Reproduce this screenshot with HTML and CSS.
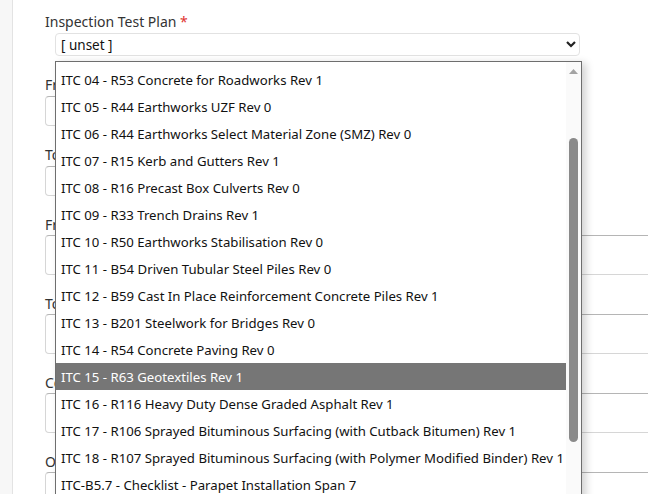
FILE: index.html
```html
<!DOCTYPE html>
<html>
<head>
<meta charset="utf-8">
<link rel="stylesheet" href="styles.css">
</head>
<body>
<div class="page">
  <aside class="rail"></aside>
  <main class="form">
    <div class="group first">
      <label class="label">Inspection Test Plan <span class="req">*</span></label>
      <div class="select">
        <span>[ unset ]</span>
        <svg class="chev" width="10" height="7" viewBox="0 0 10 7"><polyline points="1,1 5,5 9,1" fill="none" stroke="#222" stroke-width="2.2"/></svg>
      </div>
    </div>
    <div class="group">
      <label class="label">From Date</label>
      <div class="input short"></div>
    </div>
    <div class="group">
      <label class="label">To Date</label>
      <div class="input short"></div>
    </div>
    <div class="group">
      <label class="label tight">From Chainage</label>
      <div class="input tall"></div>
    </div>
    <div class="group">
      <label class="label tight">To Chainage</label>
      <div class="input tall"></div>
    </div>
    <div class="group">
      <label class="label tight">Comments</label>
      <div class="input tall"></div>
    </div>
    <div class="group">
      <label class="label tight">Outcome</label>
      <div class="input tall"></div>
    </div>
  </main>

  <div class="dropdown">
    <ul class="options">
      <li>ITC 04 - R53 Concrete for Roadworks Rev 1</li>
      <li>ITC 05 - R44 Earthworks UZF Rev 0</li>
      <li>ITC 06 - R44 Earthworks Select Material Zone (SMZ) Rev 0</li>
      <li>ITC 07 - R15 Kerb and Gutters Rev 1</li>
      <li>ITC 08 - R16 Precast Box Culverts Rev 0</li>
      <li>ITC 09 - R33 Trench Drains Rev 1</li>
      <li>ITC 10 - R50 Earthworks Stabilisation Rev 0</li>
      <li>ITC 11 - B54 Driven Tubular Steel Piles Rev 0</li>
      <li>ITC 12 - B59 Cast In Place Reinforcement Concrete Piles Rev 1</li>
      <li>ITC 13 - B201 Steelwork for Bridges Rev 0</li>
      <li>ITC 14 - R54 Concrete Paving Rev 0</li>
      <li class="active">ITC 15 - R63 Geotextiles Rev 1</li>
      <li>ITC 16 - R116 Heavy Duty Dense Graded Asphalt Rev 1</li>
      <li>ITC 17 - R106 Sprayed Bituminous Surfacing (with Cutback Bitumen) Rev 1</li>
      <li>ITC 18 - R107 Sprayed Bituminous Surfacing (with Polymer Modified Binder) Rev 1</li>
      <li>ITC-B5.7 - Checklist - Parapet Installation Span 7</li>
    </ul>
    <div class="scrollbar">
      <svg class="arrow" width="9" height="5" viewBox="0 0 9 5"><polygon points="0,5 4.5,0 9,5" fill="#a3a3a3"/></svg>
      <div class="thumb"></div>
    </div>
  </div>
</div>
</body>
</html>
```

FILE: styles.css
```css
html, body {
  margin: 0;
  padding: 0;
  background: #fff;
  overflow: hidden;
}
body {
  font-family: "Noto Sans", "Open Sans", sans-serif;
  font-size: 14px;
  color: #333;
}
.page {
  position: relative;
  display: flex;
  width: 648px;
  height: 494px;
  overflow: hidden;
}
.rail {
  width: 12px;
  flex: none;
  background: #f7f7f7;
  border-right: 1px solid #e3e3e3;
}
.form {
  flex: none;
  width: 700px;
  padding: 12px 0 0 32px;
  display: flex;
  flex-direction: column;
}
.group { margin-top: 19px; }
.group.first { margin-top: 0; }
.label {
  display: block;
  line-height: 20px;
  margin-bottom: 1px;
  color: #333;
}
.label.tight { margin-bottom: 0; }
.req { color: #e0342f; }
.select {
  margin: 1px 0 0 10px;
  width: 525px;
  height: 23px;
  box-sizing: border-box;
  border: 1px solid #e2e2e2;
  border-radius: 4px;
  display: flex;
  align-items: center;
  justify-content: space-between;
  padding: 0 3px 0 5px;
  color: #111;
  font-size: 13.5px;
}
.input {
  border: 1px solid #d6d6d6;
  border-top-color: #b5b5b5;
  border-radius: 4px;
  box-sizing: border-box;
}
.input.short { width: 300px; height: 30px; }
.input.tall { width: 660px; height: 40px; }

.dropdown {
  position: absolute;
  left: 55px;
  top: 61px;
  width: 527px;
  height: 460px;
  box-sizing: border-box;
  border: 1px solid #6e6e6e;
  background: #fff;
  display: flex;
  box-shadow: 4px 2px 8px rgba(0,0,0,0.18);
}
.options {
  list-style: none;
  margin: 0;
  padding: 4px 0 0 0;
  flex: 1;
  min-width: 0;
  color: #111;
  font-size: 13.2px;
}
.options li {
  height: 27px;
  line-height: 28px;
  padding-left: 5px;
  white-space: nowrap;
}
.options li.active {
  background: #767676;
  color: #fff;
}
.scrollbar {
  width: 15px;
  flex: none;
  background: #fafafa;
  position: relative;
}
.arrow {
  position: absolute;
  left: 3px;
  top: 7px;
}
.thumb {
  position: absolute;
  left: 3px;
  top: 76px;
  width: 9px;
  height: 304px;
  background: #8a8a8a;
  border-radius: 5px;
}
```
